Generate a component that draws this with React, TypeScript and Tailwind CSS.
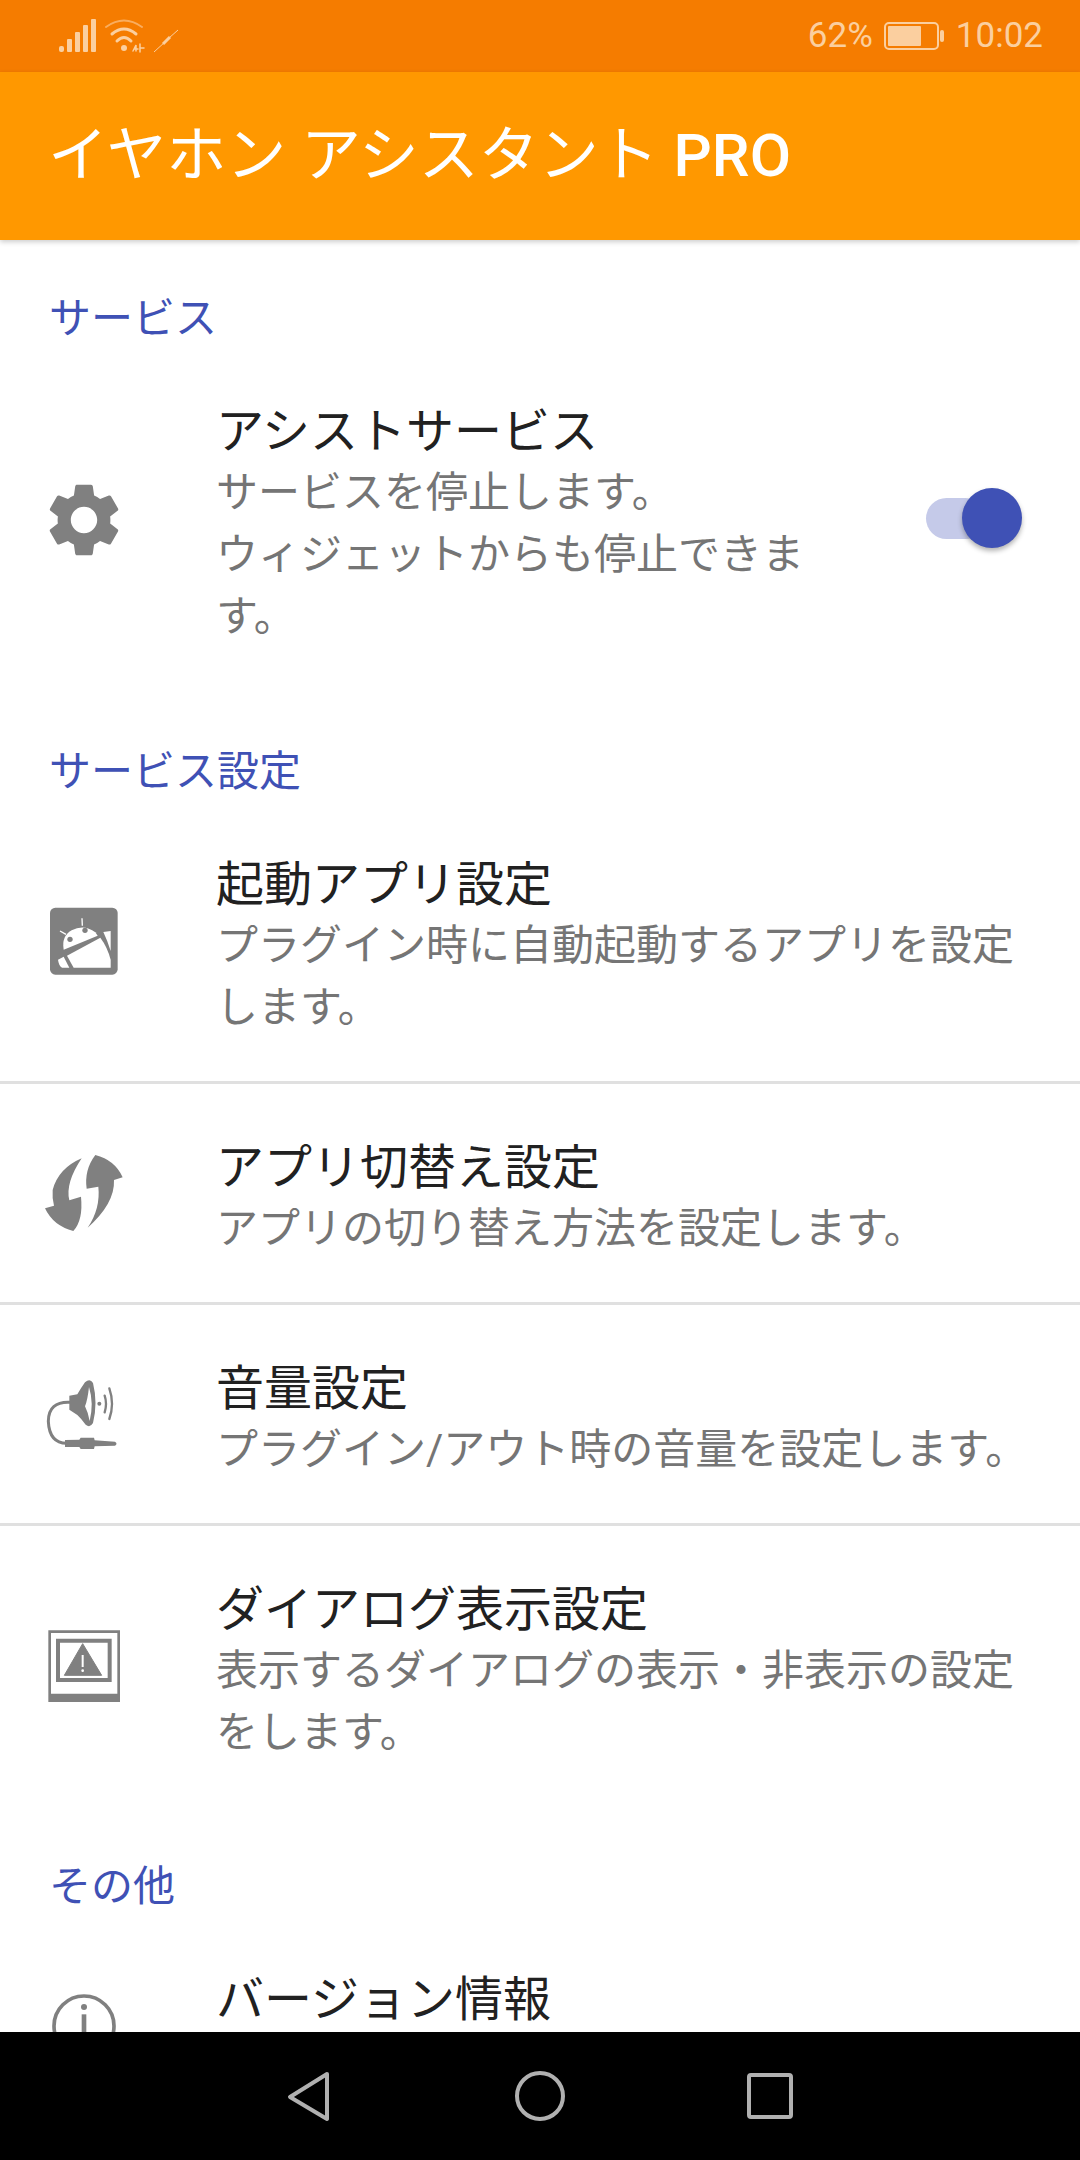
import { MdSettings } from 'react-icons/md';
import type { ReactNode } from 'react';

const font = { fontFamily: '"Roboto", "Noto Sans CJK JP", sans-serif' };

function IconBox({ y, children }: { y: number; children: ReactNode }) {
  // icons are drawn on a 360x330 grid, shown at 120x110
  return (
    <svg width="120" height="110" viewBox={`0 ${y} 360 330`} className="shrink-0" fill="#808080">
      {children}
    </svg>
  );
}

const GearIcon = () => (
  <div className="flex h-[110px] w-[120px] shrink-0 items-center justify-center pb-[11px] pl-[7px] text-[#808080]">
    <MdSettings size={88} />
  </div>
);

const AndroidIcon = () => (
  <IconBox y={35}>
    <rect x="90" y="82" width="203" height="201" rx="16" />
    <g fill="#fff">
      <path d="M131 208 Q124 168 155 150 Q192 130 226 156 L233 166 Z" />
      <path d="M141 226 L241 172 Q262 200 272 238 L272 262 L161 262 Z" />
      <path d="M250 155 L272 152 L272 212 Q262 180 250 155 Z" />
      <path d="M114 238 L131 229 L148 262 L126 262 Q116 255 114 238 Z" />
    </g>
    <circle cx="150" cy="177" r="8" />
    <circle cx="195" cy="150" r="8" />
    <path d="M138 162 L120 152 M187 136 L186 114" stroke="#fff" strokeWidth="4" />
  </IconBox>
);

const SwapIcon = () => (
  <IconBox y={12}>
    <path d="M185 55 Q115 85 98 150 Q96 175 102 197 L75 205 Q100 258 160 273 Q190 240 183 170 L148 181 Q135 130 185 55 Z" />
    <path d="M226 45 Q285 60 308 112 L282 120 Q285 190 203 263 Q242 205 235 140 L200 146 Q192 90 226 45 Z" />
  </IconBox>
);

const VolumeIcon = () => (
  <IconBox y={16}>
    <path d="M148 108 L172 104 Q185 82 195 68 Q210 54 219 70 Q234 130 219 190 Q210 206 197 195 Q185 178 172 166 L148 150 Z" />
    <path d="M207 82 Q222 130 209 184 Q205 160 195 140 Q203 120 207 82 Z" fill="#fff" />
    <circle cx="238" cy="132" r="6" />
    <g fill="none" stroke="#808080" strokeLinecap="round">
      <path d="M254 108 Q262 132 254 158" strokeWidth="7" />
      <path d="M268 86 Q284 132 268 178" strokeWidth="7" />
      <path d="M150 128 Q85 125 85 185 Q88 250 140 251" strokeWidth="9" />
    </g>
    <path d="M135 241 L178 240 L182 234 L222 234 L224 242 L285 246 Q294 252 285 258 L224 260 L222 268 L182 268 L178 262 L135 262 Z" />
  </IconBox>
);

const AlertIcon = () => (
  <IconBox y={20}>
    <path fillRule="evenodd" d="M85 60 H300 V275 H85 Z M93 68 V250 H292 V68 Z" />
    <path fillRule="evenodd" d="M108 85 H275 V215 H108 Z M120 97 V203 H263 V97 Z" />
    <path d="M188 100 L245 195 H133 Z" stroke="#808080" strokeWidth="3" strokeLinejoin="round" />
    <rect x="185" y="134" width="6" height="36" fill="#fff" />
    <circle cx="188" cy="181" r="4" fill="#fff" />
  </IconBox>
);

const InfoIcon = () => (
  <IconBox y={15}>
    <circle cx="192" cy="165" r="90" fill="none" stroke="#808080" strokeWidth="11" />
    <circle cx="192" cy="108" r="9" />
    <rect x="185" y="130" width="14" height="80" />
  </IconBox>
);

function SectionHeader({ label }: { label: string }) {
  return <div className="px-[49px] pt-[50px] text-[42px] leading-[58px] text-[#3f51b5]">{label}</div>;
}

function Row({ icon, title, sub, trailing, divider, pb = 'pb-[43px]' }: { icon: ReactNode; title: string; sub: string; trailing?: ReactNode; divider?: boolean; pb?: string }) {
  return (
    <div className={`relative flex items-center pl-[20px] pr-[30px] pt-[54px] ${pb} ${divider ? 'border-b-[3px] border-[#e0e0e0]' : ''}`}>
      {icon}
      <div className="ml-[76px] min-w-0 flex-1">
        <div className="text-[48px] leading-[60px] text-[#212121]">{title}</div>
        <div className="whitespace-pre-line text-[42px] leading-[62px] text-[#757575]">{sub}</div>
      </div>
      {trailing}
    </div>
  );
}

function Toggle() {
  return (
    <div className="relative mb-[13px] mr-[64px] h-[41px] w-[60px] shrink-0 rounded-full bg-[#c5cae9]">
      <div className="absolute left-[36px] top-[-10px] h-[60px] w-[60px] rounded-full bg-[#3f51b5] shadow-[0_3px_5px_rgba(0,0,0,0.3)]" />
    </div>
  );
}

function StatusBar() {
  return (
    <div className="flex h-[72px] shrink-0 items-center justify-between bg-[#f57c00] pl-[59px] pr-[37px] text-[35px] text-[#fbcf9f]">
      <div className="flex items-center">
        <svg width="37" height="34" viewBox="0 0 37 34" fill="#fbcf9f">
          <rect x="0" y="27" width="5" height="6" rx="2" />
          <rect x="8" y="20" width="5" height="13" rx="1" />
          <rect x="16" y="13" width="5" height="20" rx="1" />
          <rect x="24" y="6" width="5" height="27" rx="1" />
          <rect x="32" y="0" width="5" height="33" rx="1" />
        </svg>
        <svg width="40" height="34" viewBox="0 0 40 34" fill="none" stroke="#fbcf9f" strokeLinecap="round" className="ml-[9px]">
          <path d="M1 8 Q19 -5 37 8" strokeWidth="2" opacity="0.6" />
          <path d="M7 15 Q19 5 31 15" strokeWidth="3" />
          <path d="M12 22 Q19 15 26 22" strokeWidth="3" />
          <circle cx="19" cy="29" r="3" fill="#fbcf9f" stroke="none" />
          <path d="M28 32 L31 26 V32 M29 30 H33 M35 25 V33 M35 29 L39 29" strokeWidth="1.5" />
        </svg>
        <svg width="26" height="24" viewBox="0 0 26 24" fill="none" stroke="#fbcf9f" className="ml-[8px] mt-[10px]">
          <path d="M1 23 L13 12" strokeWidth="1" />
          <path d="M10 15 L17 8" strokeWidth="3" />
          <path d="M16 9 L25 1" strokeWidth="1" />
        </svg>
      </div>
      <div className="flex items-center">
        <span>62%</span>
        <svg width="60" height="28" viewBox="0 0 60 28" className="ml-[11px]">
          <rect x="1" y="1" width="53" height="26" rx="4" fill="none" stroke="#fbcf9f" strokeWidth="2" />
          <rect x="4" y="4" width="33" height="20" rx="1" fill="#fbcf9f" />
          <rect x="56" y="8" width="4" height="12" rx="2" fill="#fbcf9f" />
        </svg>
        <span className="ml-[12px]">10:02</span>
      </div>
    </div>
  );
}

function NavBar() {
  return (
    <div className="flex h-[128px] shrink-0 items-center justify-center bg-black">
      <svg width="1080" height="128" viewBox="0 0 1080 128" fill="none" stroke="#b0b0b0" strokeWidth="4" strokeLinejoin="round">
        <path d="M327 42 L290 65 L327 87 Z" />
        <circle cx="540" cy="64" r="23" />
        <rect x="749" y="43" width="42" height="42" rx="2" />
      </svg>
    </div>
  );
}

export default function App() {
  return (
    <div className="flex h-[2160px] w-[1080px] flex-col overflow-hidden bg-white" style={font}>
      <StatusBar />
      <div className="z-10 flex h-[168px] shrink-0 items-center whitespace-pre bg-[#ff9800] px-[48px] text-[60px] text-white shadow-[0_2px_5px_rgba(0,0,0,0.2)]">
        イヤホン アシスタント <span className="font-medium">PRO</span>
      </div>
      <div className="min-h-0 flex-1 overflow-hidden">
        <SectionHeader label="サービス" />
        <Row
          icon={<GearIcon />}
          title="アシストサービス"
          sub={'サービスを停止します。\nウィジェットからも停止できま\nす。'}
          trailing={<Toggle />}
          pb="pb-[45px]"
        />
        <SectionHeader label="サービス設定" />
        <Row icon={<AndroidIcon />} title="起動アプリ設定" sub={'プラグイン時に自動起動するアプリを設定\nします。'} divider pb="pb-[42px]" />
        <Row icon={<SwapIcon />} title="アプリ切替え設定" sub="アプリの切り替え方法を設定します。" divider pb="pb-[42px]" />
        <Row icon={<VolumeIcon />} title="音量設定" sub="プラグイン/アウト時の音量を設定します。" divider pb="pb-[42px]" />
        <Row icon={<AlertIcon />} title="ダイアログ表示設定" sub={'表示するダイアログの表示・非表示の設定\nをします。'} pb="pb-[44px]" />
        <SectionHeader label="その他" />
        <Row icon={<InfoIcon />} title="バージョン情報" sub={'\u00a0'} />
      </div>
      <NavBar />
    </div>
  );
}
